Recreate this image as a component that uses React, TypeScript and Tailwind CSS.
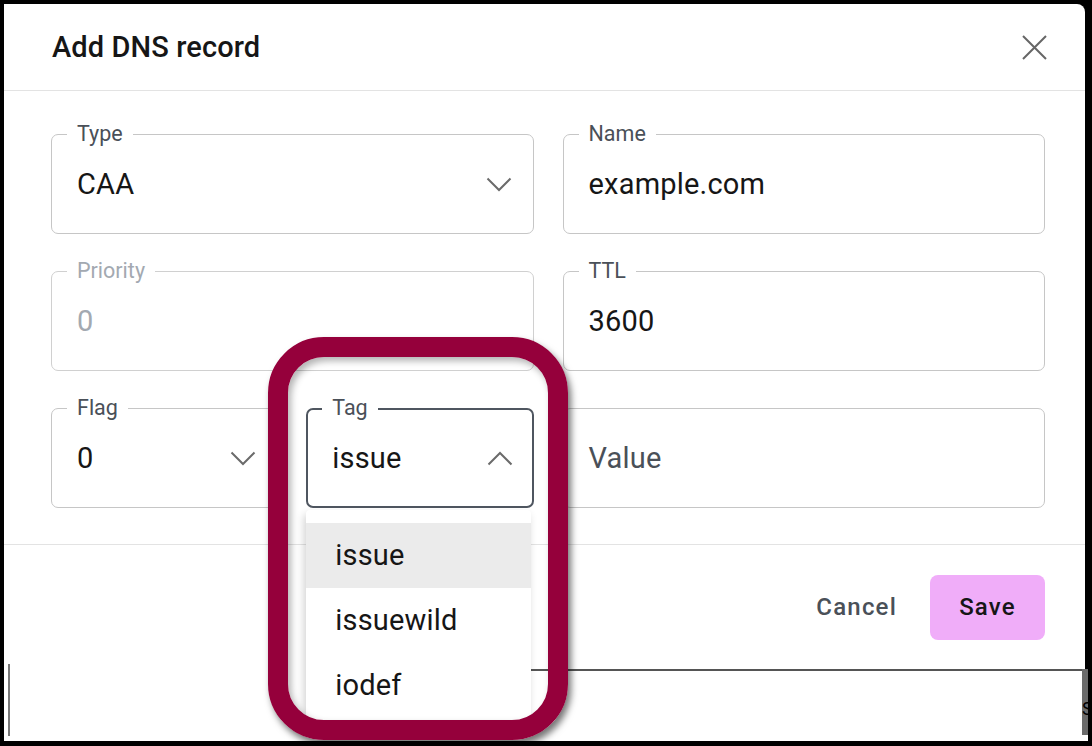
import React from "react";

const font = { fontFamily: "Roboto, 'Noto Sans', sans-serif" };

function Chevron({ up = false }: { up?: boolean }) {
  return (
    <svg width="26" height="15" viewBox="0 0 26 15" className="shrink-0">
      <polyline
        points={up ? "1.5,13.5 13,2 24.5,13.5" : "1.5,1.5 13,13 24.5,1.5"}
        fill="none"
        stroke="#6b6b6b"
        strokeWidth="2"
      />
    </svg>
  );
}

function Field({
  label,
  value,
  chevron,
  disabled,
  placeholder,
}: {
  label?: string;
  value: string;
  chevron?: boolean;
  disabled?: boolean;
  placeholder?: boolean;
}) {
  return (
    <div
      className={`relative h-[100px] rounded-[7px] border flex items-center pl-[25px] pr-[21px] ${
        disabled ? "border-[#d0d0d0]" : "border-[#c6c6c6]"
      }`}
    >
      {label && (
        <span
          className={`absolute -top-[13px] left-[15px] px-[10px] bg-white text-[21.5px] leading-[24px] ${
            disabled ? "text-[#a3a9b1]" : "text-[#4a5058]"
          }`}
        >
          {label}
        </span>
      )}
      <span
        className={`flex-1 text-[29px] leading-[34px] tracking-[0.2px] ${
          disabled ? "text-[#a3a9b1]" : placeholder ? "text-[#4a5058]" : "text-[#161616]"
        }`}
      >
        {value}
      </span>
      {chevron && <Chevron />}
    </div>
  );
}

export default function App() {
  return (
    <div
      className="relative w-[1092px] h-[746px] bg-black pt-[4px] pl-[4px] flex flex-col overflow-hidden"
      style={font}
    >
      {/* Dialog */}
      <div className="w-[1081px] h-[665px] bg-white rounded-tr-[8px] flex flex-col">
        <div className="h-[86px] flex items-center justify-between pl-[48px] pr-[38px]">
          <h1 className="text-[29px] leading-[34px] font-medium text-[#161616] tracking-[0.1px]">
            Add DNS record
          </h1>
          <svg width="25" height="25" viewBox="0 0 25 25">
            <path d="M1 1 L24 24 M24 1 L1 24" stroke="#666" strokeWidth="2" fill="none" />
          </svg>
        </div>
        <div className="h-px bg-[#e3e3e3]" />

        <div className="pt-[43px] pl-[47px] pr-[40px] pb-[36px] grid grid-cols-2 gap-x-[29px] gap-y-[37px]">
          <Field label="Type" value="CAA" chevron />
          <Field label="Name" value="example.com" />
          <Field label="Priority" value="0" disabled />
          <Field label="TTL" value="3600" />
          <div className="grid grid-cols-2 gap-x-[28px]">
            <Field label="Flag" value="0" chevron />
            {/* Tag select, open */}
            <div className="relative">
              <div className="relative h-[100px] rounded-[7px] border-2 border-[#4f5660] flex items-center pl-[24px] pr-[19px]">
                <span className="absolute -top-[14px] left-[14px] px-[10px] bg-white text-[21.5px] leading-[24px] text-[#4a5058]">
                  Tag
                </span>
                <span className="flex-1 text-[29px] leading-[34px] tracking-[0.2px] text-[#161616]">issue</span>
                <Chevron up />
              </div>
              <div className="absolute left-0 top-[102px] w-[225px] h-[210px] bg-white rounded-t-[4px] pt-[13px] shadow-[-2px_4px_8px_rgba(0,0,0,0.18)] z-10">
                {["issue", "issuewild", "iodef"].map((t, i) => (
                  <div
                    key={t}
                    className={`h-[65px] flex items-center pl-[29px] text-[29px] tracking-[0.2px] text-[#161616] ${
                      i === 0 ? "bg-[#ebebeb]" : ""
                    }`}
                  >
                    {t}
                  </div>
                ))}
              </div>
            </div>
          </div>
          <Field value="Value" placeholder />
        </div>

        <div className="h-px bg-[#e3e3e3]" />
        <div className="flex-1 flex items-center justify-end pr-[40px] gap-[33px]">
          <button className="text-[24px] font-medium tracking-[1.2px] text-[#4a5058]">Cancel</button>
          <button className="w-[115px] h-[65px] rounded-[8px] bg-[#f0adf9] text-[24px] font-medium tracking-[1.2px] text-[#161616]">
            Save
          </button>
        </div>
      </div>

      {/* Page behind the dialog */}
      <div className="relative w-[1084px] h-[72px] bg-white">
        <div className="absolute left-[302px] right-[6px] top-0 h-[2px] bg-[#555]" />
        <div className="absolute left-[302px] top-0 w-px h-[50px] bg-[#555]" />
        <div className="absolute left-[4px] -top-[5px] w-[2px] h-[72px] bg-[#777]" />
        <div className="absolute right-0 top-0 w-[6px] h-[66px] bg-[#6b6b6b] overflow-hidden">
          <span className="absolute left-0 top-[30px] text-[18px] leading-[20px] text-black">S</span>
        </div>
      </div>

      {/* Annotation highlight */}
      <div className="absolute left-[268px] top-[337px] w-[300px] h-[403px] rounded-[56px] border-[20px] border-[#95003b] shadow-[3px_5px_7px_rgba(0,0,0,0.55),inset_3px_4px_7px_rgba(0,0,0,0.3)] z-20" />
    </div>
  );
}
